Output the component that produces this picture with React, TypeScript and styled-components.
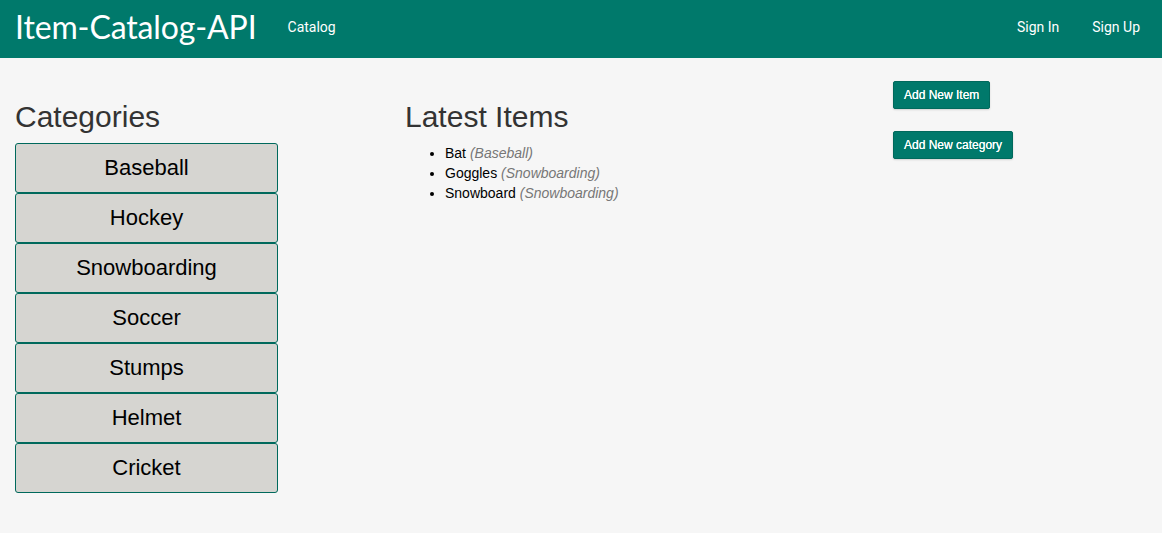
import styled, { createGlobalStyle } from "styled-components";

const GlobalStyle = createGlobalStyle`
  html, body {
    margin: 0;
    padding: 0;
    background: #f6f6f6;
    font-family: "Liberation Sans", Arial, sans-serif;
    font-size: 14px;
    color: #333;
  }
  * { box-sizing: border-box; }
`;

const Navbar = styled.nav`
  height: 58px;
  background: #00796b;
  display: flex;
  align-items: center;
  padding: 0 22px 0 15px;
`;

const Brand = styled.a`
  font-family: "Lato", "Open Sans", sans-serif;
  font-size: 32px;
  letter-spacing: -0.12px;
  color: #fff;
  text-decoration: none;
  margin-right: 31px;
  margin-top: -6px;
`;

const NavLink = styled.a`
  font-family: Roboto, "Liberation Sans", sans-serif;
  font-size: 14px;
  color: #fff;
  text-decoration: none;
  margin-top: -4px;
`;

const NavRight = styled.div`
  margin-left: auto;
  display: flex;
  gap: 33px;
`;

const Main = styled.main`
  display: grid;
  grid-template-columns: 390px 488px 1fr;
  align-items: start;
  padding: 0 15px;
`;

const Heading = styled.h2`
  font-size: 30px;
  font-weight: 400;
  line-height: 33px;
  margin: 42px 0 10px;
  color: #333;
`;

const CategoryList = styled.div`
  display: flex;
  flex-direction: column;
  width: 263px;
`;

const CategoryButton = styled.button`
  height: 50px;
  border: 1px solid #00695c;
  border-radius: 3px;
  background: #d6d5d1;
  font-family: "Liberation Sans", Arial, sans-serif;
  font-size: 22px;
  color: #000;
  padding: 0;
  cursor: pointer;
`;

const ItemList = styled.ul`
  margin: 0;
  padding-left: 40px;
  line-height: 20px;
  font-size: 14px;
`;

const Item = styled.li`
  color: #000;
`;

const ItemCategory = styled.em`
  color: #777;
`;

const Actions = styled.div`
  display: flex;
  flex-direction: column;
  align-items: flex-start;
  gap: 22px;
  padding-top: 23px;
`;

const ActionButton = styled.button`
  background: #00796b;
  color: #fff;
  border: 1px solid #00695c;
  border-radius: 2px;
  font-family: "Liberation Sans", Arial, sans-serif;
  font-size: 12px;
  line-height: 18px;
  padding: 4px 10px;
  box-shadow: 0 1px 2px rgba(0, 0, 0, 0.15);
  text-shadow: 0 0 0.4px #fff;
  cursor: pointer;
`;

const categories = ["Baseball", "Hockey", "Snowboarding", "Soccer", "Stumps", "Helmet", "Cricket"];

const latest = [
  { name: "Bat", category: "Baseball" },
  { name: "Goggles", category: "Snowboarding" },
  { name: "Snowboard", category: "Snowboarding" },
];

export default function App() {
  return (
    <>
      <GlobalStyle />
      <Navbar>
        <Brand href="#">Item-Catalog-API</Brand>
        <NavLink href="#">Catalog</NavLink>
        <NavRight>
          <NavLink href="#">Sign In</NavLink>
          <NavLink href="#">Sign Up</NavLink>
        </NavRight>
      </Navbar>
      <Main>
        <section>
          <Heading>Categories</Heading>
          <CategoryList>
            {categories.map((c) => (
              <CategoryButton key={c}>{c}</CategoryButton>
            ))}
          </CategoryList>
        </section>
        <section>
          <Heading>Latest Items</Heading>
          <ItemList>
            {latest.map((it) => (
              <Item key={it.name}>
                {it.name} <ItemCategory>({it.category})</ItemCategory>
              </Item>
            ))}
          </ItemList>
        </section>
        <Actions>
          <ActionButton>Add New Item</ActionButton>
          <ActionButton>Add New category</ActionButton>
        </Actions>
      </Main>
    </>
  );
}
